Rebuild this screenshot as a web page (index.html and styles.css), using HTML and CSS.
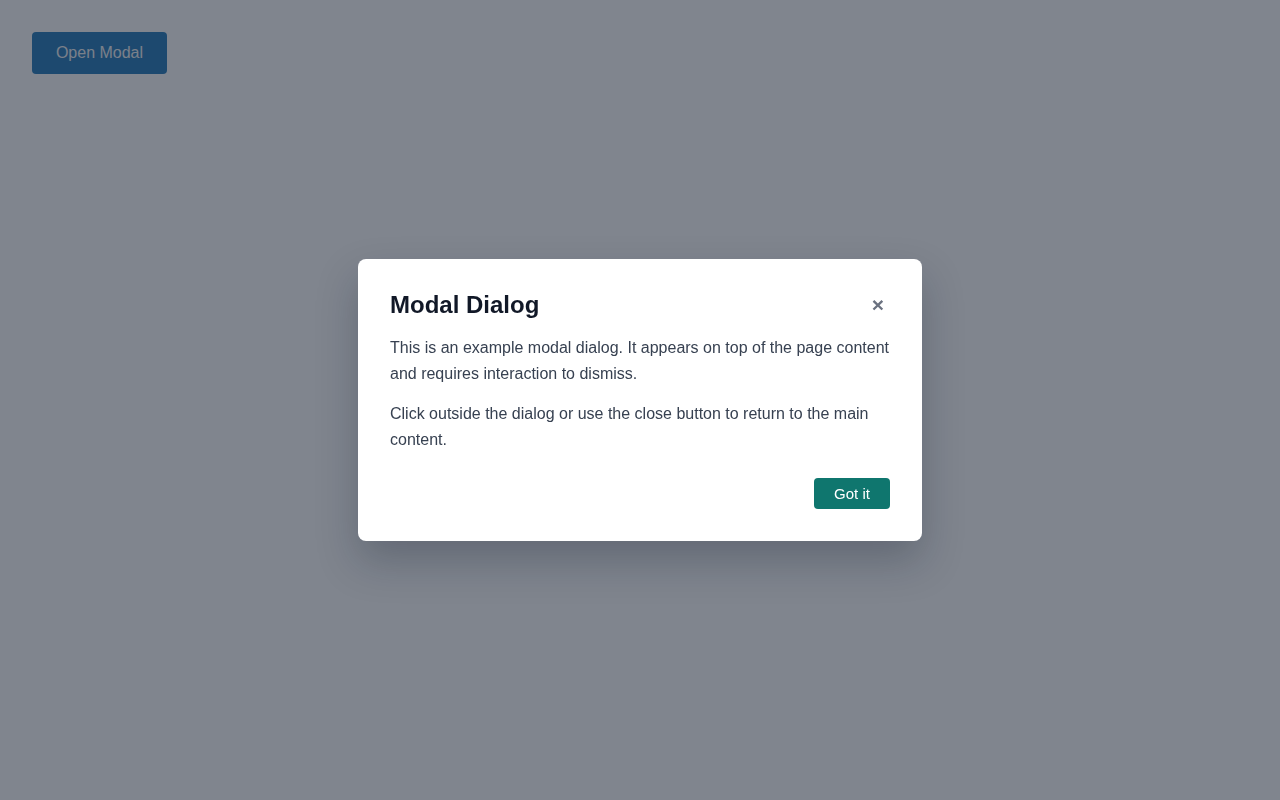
FILE: index.html
```html
<!DOCTYPE html>
<html lang="en">
<head>
    <meta charset="UTF-8">
    <meta name="viewport" content="width=device-width, initial-scale=1.0">
    <title>Modal Dialog</title>
    <link rel="stylesheet" href="styles.css">
</head>
<body>
    <!-- Botão da página principal -->
    <button class="open-btn">Open Modal</button>

    <!-- Fundo escurecido + diálogo -->
    <div class="overlay">
        <div class="modal" role="dialog" aria-labelledby="modal-title">
            <div class="modal-header">
                <h2 id="modal-title">Modal Dialog</h2>
                <button class="close-btn" aria-label="Close">&times;</button>
            </div>
            <p>This is an example modal dialog. It appears on top of the page content and requires interaction to dismiss.</p>
            <p>Click outside the dialog or use the close button to return to the main content.</p>
            <div class="modal-footer">
                <button class="ok-btn">Got it</button>
            </div>
        </div>
    </div>
</body>
</html>
```
FILE: styles.css
```css
/* Página */
body {
    font-family: 'Liberation Sans', Arial, sans-serif;
    background: #ffffff;
    margin: 0;
    padding: 32px;
    height: 100vh;
    box-sizing: border-box;
}

.open-btn {
    background-color: #3886c0;
    color: #f3f4f6;
    font-family: inherit;
    font-size: 16px;
    width: 135px;
    height: 42px;
    border: none;
    border-radius: 4px;
    cursor: pointer;
}

/* Fundo escuro sobre a página */
.overlay {
    position: fixed;
    inset: 0;
    background: rgba(2, 12, 30, 0.5);
    display: flex;
    justify-content: center;
    align-items: center;
}

.modal {
    background: #ffffff;
    width: 564px;
    box-sizing: border-box;
    padding: 32px;
    border-radius: 8px;
    box-shadow: 0 20px 40px rgba(15, 23, 42, 0.25);
    margin-top: -1px;
}

.modal-header {
    display: flex;
    justify-content: space-between;
    align-items: center;
    height: 28px;
    margin-bottom: 16px;
}

.modal-header h2 {
    margin: 0;
    font-size: 24px;
    line-height: 28px;
    font-weight: bold;
    color: #111827;
}

.close-btn {
    background: none;
    border: none;
    padding: 0;
    width: 26px;
    height: 26px;
    margin-right: -1px;
    font-family: inherit;
    font-size: 21px;
    font-weight: bold;
    line-height: 26px;
    color: #6b7280;
    cursor: pointer;
}

.modal p {
    margin: 0 0 14px;
    font-size: 16px;
    line-height: 26px;
    color: #374151;
}

.modal-footer {
    display: flex;
    justify-content: flex-end;
    margin-top: 25px;
}

.ok-btn {
    background-color: #0f766e;
    color: #ffffff;
    font-family: inherit;
    font-size: 15px;
    width: 76px;
    height: 31px;
    border: none;
    border-radius: 4px;
    cursor: pointer;
}
```
